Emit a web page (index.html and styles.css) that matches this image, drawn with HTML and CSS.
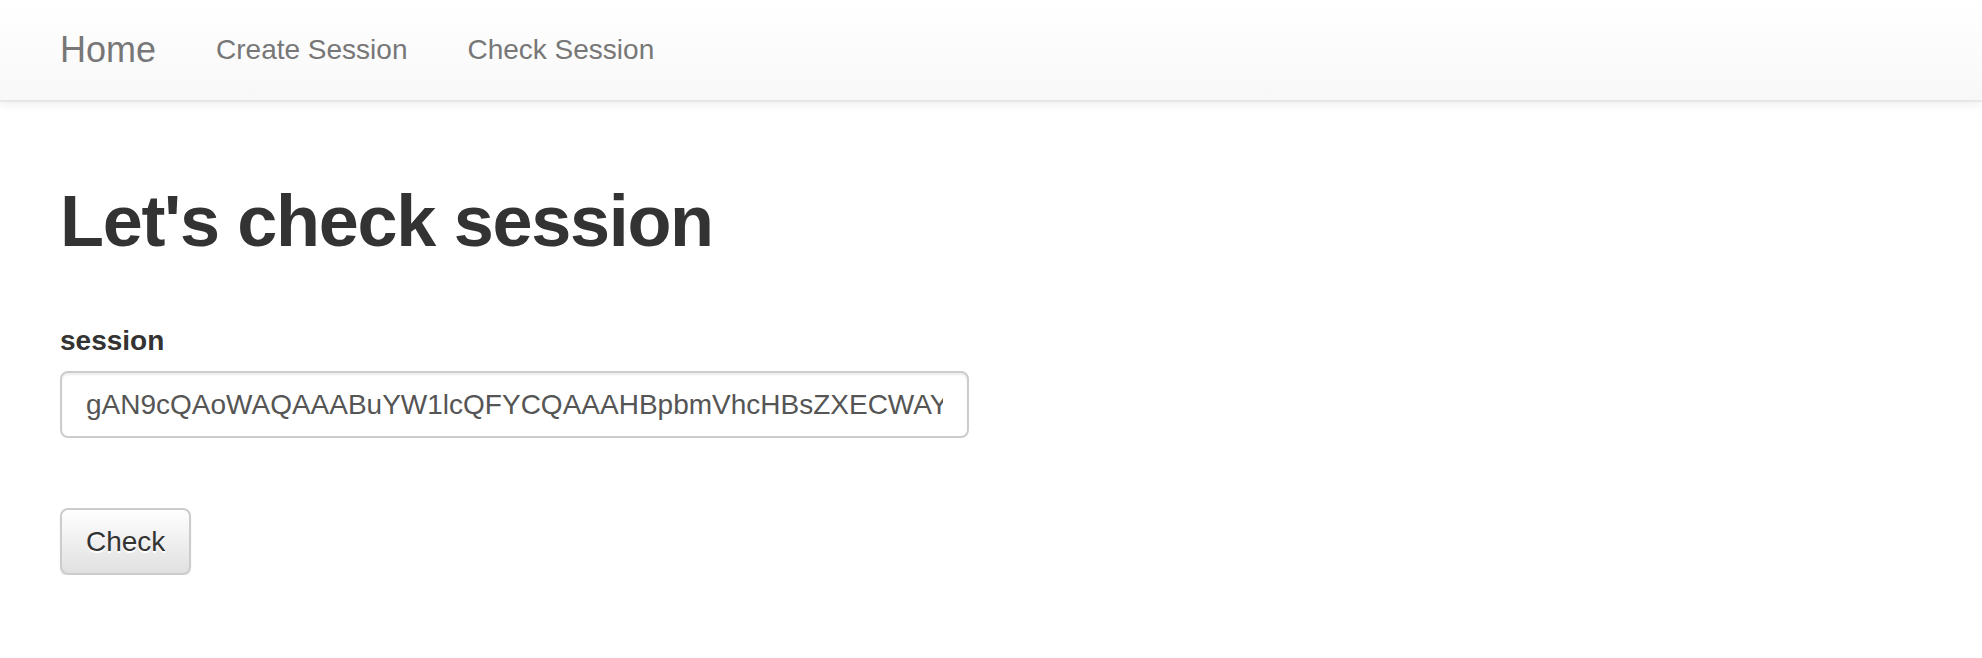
FILE: index.html
```html
<!DOCTYPE html>
<html>
<head>
<meta charset="utf-8">
<title>Check Session</title>
<link rel="stylesheet" href="styles.css">
</head>
<body>
<nav class="navbar">
  <a class="brand" href="#">Home</a>
  <ul class="nav">
    <li><a href="#">Create Session</a></li>
    <li><a href="#">Check Session</a></li>
  </ul>
</nav>
<main class="container">
  <h1 class="title">Let's check session</h1>
  <form class="form">
    <div class="form-group">
      <label class="label" for="session">session</label>
      <input class="input" id="session" type="text" value="gAN9cQAoWAQAAABuYW1lcQFYCQAAAHBpbmVhcHBsZXECWAYAAABhZ2VxA0sDdS4">
    </div>
    <button class="btn" type="button">Check</button>
  </form>
</main>
</body>
</html>
```

FILE: styles.css
```css
html, body {
  margin: 0;
  padding: 0;
  background: #fff;
}
body {
  font-family: "Liberation Sans", Arial, Helvetica, sans-serif;
  font-size: 28px;
  line-height: 1.42857;
  color: #333;
}
.navbar {
  display: flex;
  align-items: center;
  height: 100px;
  padding-left: 30px;
  background: linear-gradient(to bottom, #fff 0%, #f8f8f8 100%);
  border-bottom: 2px solid #e7e7e7;
  box-shadow: inset 0 2px 0 rgba(255,255,255,.15), 0 2px 10px rgba(0,0,0,.075);
}
.brand {
  font-size: 36px;
  line-height: 40px;
  padding: 0 30px;
  color: #777;
  text-decoration: none;
}
.nav {
  display: flex;
  list-style: none;
  margin: 0;
  padding: 0;
}
.nav a {
  display: block;
  padding: 0 30px;
  font-size: 28px;
  line-height: 40px;
  color: #777;
  text-decoration: none;
}
.container {
  padding: 0 60px;
}
.title {
  margin: 80px 0 60px;
  font-size: 72px;
  line-height: 79px;
  font-weight: bold;
  letter-spacing: -1.3px;
  color: #333;
}
.form-group {
  margin-bottom: 70px;
}
.label {
  display: block;
  font-weight: bold;
  margin-bottom: 10px;
  line-height: 40px;
}
.input {
  display: block;
  box-sizing: border-box;
  width: 909px;
  height: 67px;
  padding: 12px 24px;
  font-family: inherit;
  font-size: 28px;
  color: #555;
  background: #fff;
  border: 2px solid #ccc;
  border-radius: 8px;
  box-shadow: inset 0 2px 2px rgba(0,0,0,.075);
  outline: none;
}
.btn {
  box-sizing: border-box;
  height: 67px;
  padding: 12px 24px;
  font-family: inherit;
  font-size: 28px;
  line-height: 40px;
  color: #333;
  text-shadow: 0 2px 0 #fff;
  background: linear-gradient(to bottom, #fff 0%, #e0e0e0 100%);
  border: 2px solid #ccc;
  border-radius: 8px;
  box-shadow: inset 0 2px 0 rgba(255,255,255,.15), 0 2px 2px rgba(0,0,0,.075);
}
```
